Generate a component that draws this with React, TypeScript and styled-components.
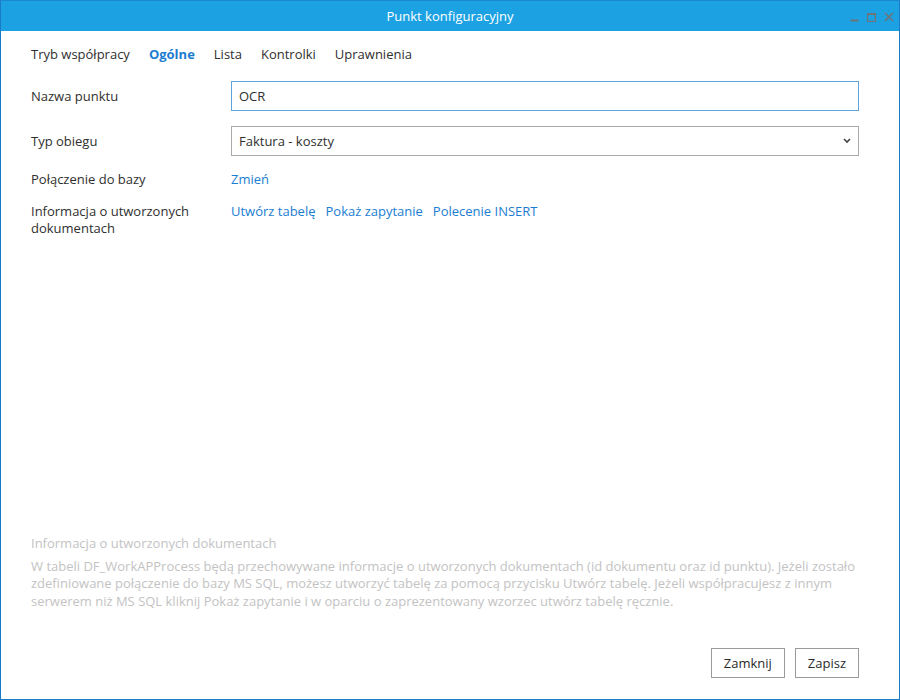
import React from "react";
import styled, { createGlobalStyle } from "styled-components";

const Global = createGlobalStyle`
  html, body { margin: 0; padding: 0; background: #fff; }
  body { font-family: "Open Sans", "Noto Sans", sans-serif; }
  * { box-sizing: border-box; }
`;

const Window = styled.div`
  width: 900px;
  height: 700px;
  border: 1px solid #1a7bc9;
  border-top-color: #1a86d4;
  display: flex;
  flex-direction: column;
  background: #fff;
  font-size: 13px;
  color: #2f2f2f;
`;

const TitleBar = styled.div`
  height: 30px;
  background: #1ca2e2;
  color: #fff;
  display: flex;
  align-items: center;
  justify-content: center;
  position: relative;
  font-size: 13px;
`;

const Controls = styled.div`
  position: absolute;
  right: 5px;
  top: 11px;
  display: flex;
  gap: 8px;
  align-items: center;
`;

const Body = styled.div`
  flex: 1;
  display: flex;
  flex-direction: column;
  padding: 13px 40px 0 30px;
`;

const Tabs = styled.div`
  display: flex;
  gap: 19px;
  height: 20px;
  align-items: center;
  margin-bottom: 17px;
`;

const Tab = styled.span<{ $active?: boolean }>`
  color: ${(p) => (p.$active ? "#1b7dd1" : "#2f2f2f")};
  font-weight: ${(p) => (p.$active ? 700 : 400)};
  cursor: pointer;
`;

const Row = styled.div<{ $top?: boolean }>`
  display: grid;
  grid-template-columns: 200px 1fr;
  align-items: ${(p) => (p.$top ? "start" : "center")};
  margin-bottom: 15px;
`;

const Label = styled.div`
  line-height: 17px;
`;

const TextInput = styled.div`
  height: 30px;
  border: 1px solid #5ea2e0;
  display: flex;
  align-items: center;
  padding-left: 7px;
`;

const Select = styled.div`
  height: 30px;
  border: 1px solid #ababab;
  display: flex;
  align-items: center;
  justify-content: space-between;
  padding: 0 6px 0 7px;
`;

const Links = styled.div`
  display: flex;
  gap: 10px;
  line-height: 17px;
`;

const Link = styled.a`
  color: #1b7dd1;
  text-decoration: none;
  cursor: pointer;
`;

const Info = styled.div`
  margin-top: auto;
  color: #c3c3c3;
  line-height: 17.5px;
`;

const InfoTitle = styled.div`
  margin-bottom: 5px;
`;

const Footer = styled.div`
  display: flex;
  justify-content: flex-end;
  gap: 10px;
  padding: 38px 0 21px;
`;

const Button = styled.button`
  height: 30px;
  border: 1px solid #9a9a9a;
  background: #fff;
  font-family: inherit;
  font-size: 13px;
  color: #2a2a2a;
  padding: 0 12px;
`;

const Ctl = styled.svg`
  display: block;
`;

export default function App() {
  return (
    <>
      <Global />
      <Window>
        <TitleBar>
          Punkt konfiguracyjny
          <Controls>
            <Ctl width="9" height="10" viewBox="0 0 9 10">
              <rect x="0.5" y="7.5" width="8" height="2" fill="#6e7378" />
            </Ctl>
            <Ctl width="9" height="10" viewBox="0 0 9 10">
              <rect x="0.6" y="1.6" width="7.8" height="7.8" fill="none" stroke="#6e7378" strokeWidth="1.2" />
              <rect x="0.5" y="1" width="8" height="2" fill="#6e7378" />
            </Ctl>
            <Ctl width="10" height="10" viewBox="0 0 10 10">
              <path d="M1 1 L9 9 M9 1 L1 9" stroke="#6e7378" strokeWidth="1.6" />
            </Ctl>
          </Controls>
        </TitleBar>
        <Body>
          <Tabs>
            <Tab>Tryb współpracy</Tab>
            <Tab $active>Ogólne</Tab>
            <Tab>Lista</Tab>
            <Tab>Kontrolki</Tab>
            <Tab>Uprawnienia</Tab>
          </Tabs>
          <Row>
            <Label>Nazwa punktu</Label>
            <TextInput>OCR</TextInput>
          </Row>
          <Row>
            <Label>Typ obiegu</Label>
            <Select>
              Faktura - koszty
              <svg width="10" height="8" viewBox="0 0 10 8">
                <path d="M2 2 L5 5 L8 2" fill="none" stroke="#444" strokeWidth="1.6" />
              </svg>
            </Select>
          </Row>
          <Row>
            <Label>Połączenie do bazy</Label>
            <Links>
              <Link>Zmień</Link>
            </Links>
          </Row>
          <Row $top>
            <Label>
              Informacja o utworzonych
              <br />
              dokumentach
            </Label>
            <Links>
              <Link>Utwórz tabelę</Link>
              <Link>Pokaż zapytanie</Link>
              <Link>Polecenie INSERT</Link>
            </Links>
          </Row>
          <Info>
            <InfoTitle>Informacja o utworzonych dokumentach</InfoTitle>
            W tabeli DF_WorkAPProcess będą przechowywane informacje o utworzonych dokumentach (id dokumentu oraz id punktu). Jeżeli zostało
            <br />
            zdefiniowane połączenie do bazy MS SQL, możesz utworzyć tabelę za pomocą przycisku Utwórz tabelę. Jeżeli współpracujesz z innym
            <br />
            serwerem niż MS SQL kliknij Pokaż zapytanie i w oparciu o zaprezentowany wzorzec utwórz tabelę ręcznie.
          </Info>
          <Footer>
            <Button>Zamknij</Button>
            <Button>Zapisz</Button>
          </Footer>
        </Body>
      </Window>
    </>
  );
}
